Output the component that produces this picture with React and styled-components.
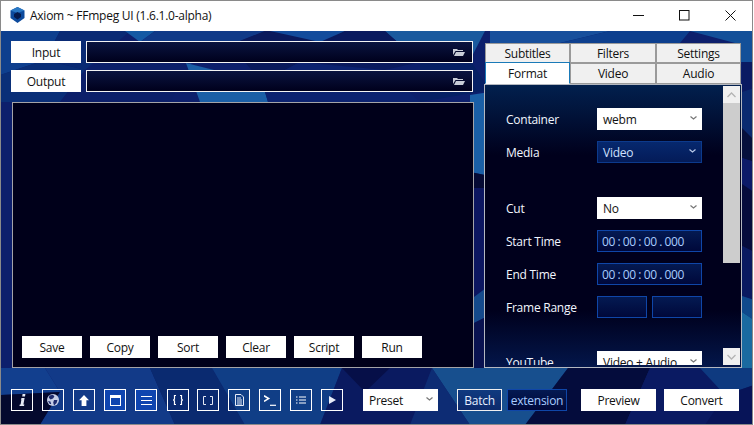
import React from "react";
import styled, { createGlobalStyle } from "styled-components";

const GlobalStyle = createGlobalStyle`
    html, body {
        margin: 0;
        padding: 0;
        background: #fff;
    }
    * {
        box-sizing: border-box;
    }
`;

const FONT = `"Open Sans", "Noto Sans", "Liberation Sans", sans-serif`;

// low-poly wallpaper, in screen coordinates
const polygons = [
    ["#0d1f6c", "0,31 754,31 754,425 0,425"],
    ["#0e3f8e", "0,31 60,31 45,60 0,75"],
    ["#0a2a74", "60,31 130,31 85,70 45,60"],
    ["#0a2f78", "0,75 45,60 85,70 60,102 0,102"],
    ["#145aa4", "125,31 155,31 140,42"],
    ["#0c1f6a", "85,70 140,42 190,64 170,102 60,102"],
    ["#103a88", "155,31 265,31 230,45 190,64 140,42"],
    ["#1b5fa6", "186,63 262,82 268,102 200,102"],
    ["#0a1a5c", "230,45 265,31 350,31 300,62 262,82"],
    ["#134c9c", "270,31 345,31 320,42"],
    ["#0c2270", "262,82 300,62 385,70 420,102 268,102"],
    ["#1a5a9e", "385,31 485,31 470,60 420,62"],
    ["#0a1a5e", "345,31 385,31 420,62 385,70 300,62"],
    ["#062064", "420,62 470,60 490,90 420,102"],
    ["#1a5fa6", "470,95 490,92 490,176 470,172"],
    ["#050a34", "470,172 490,176 490,192 470,188"],
    ["#0c1660", "470,188 490,188 490,290 470,300"],
    ["#154a8c", "470,300 490,285 490,315 470,325"],
    ["#091250", "470,325 490,315 490,370 470,370"],
    ["#174f9c", "490,31 610,31 560,43 490,43"],
    ["#0d3f8e", "610,31 690,31 680,43 560,43"],
    ["#135099", "690,31 754,31 754,62 735,62 735,43"],
    ["#0a1a62", "742,62 754,62 754,92 742,92"],
    ["#0a2a70", "742,92 754,88 754,140 742,128"],
    ["#06103c", "742,128 754,140 754,162 742,158"],
    ["#0c1a68", "742,158 754,162 754,192 742,184"],
    ["#060c3c", "742,184 754,192 754,252 742,246"],
    ["#0a1a60", "742,246 754,252 754,300 742,296"],
    ["#0f4a8c", "742,296 754,300 754,320 742,312"],
    ["#1a6aa0", "742,312 754,320 754,372 742,372"],
    ["#123f8e", "0,368 45,368 60,392 0,395"],
    ["#04092e", "0,395 60,392 40,425 0,425"],
    ["#123a88", "45,368 150,368 175,425 40,425 60,392"],
    ["#0a2a70", "150,368 212,368 245,425 175,425"],
    ["#103e86", "212,368 342,368 320,425 245,425"],
    ["#0a1a60", "342,368 432,368 410,425 320,425"],
    ["#060f48", "342,368 390,368 365,392"],
    ["#174f8e", "432,368 568,368 525,425 470,425"],
    ["#0d2c74", "432,368 470,425 410,425"],
    ["#040c3c", "568,368 650,368 625,425 525,425"],
    ["#0a1a62", "650,368 754,368 754,425 625,425"],
    ["#0e3a80", "700,368 754,368 754,385 725,395"],
    ["#071458", "725,395 754,385 754,425 705,425"],
];

const App = () => {
    const leftButtons = ["Save", "Copy", "Sort", "Clear", "Script", "Run"];
    return (
        <>
            <GlobalStyle />
            <Window>
                <TitleBar>
                    <AppIcon viewBox="0 0 15 16">
                        <path d="M7.5 0 14.5 3.5V11L7.5 16 .5 11V3.5Z" fill="#0d4a9c" />
                        <path d="M7.5 0 14.5 3.5 7.5 6 .5 3.5Z" fill="#2a78c4" />
                        <path d="M7.5 5 11 7V10L7.5 12.5 4 10V7Z" fill="#051a4c" />
                    </AppIcon>
                    <Title>Axiom ~ FFmpeg UI (1.6.1.0-alpha)</Title>
                    <WindowControls>
                        <WindowControl><svg width="11" height="11"><path d="M0 5.5H11" stroke="#111" /></svg></WindowControl>
                        <WindowControl><svg width="11" height="11"><rect x=".5" y=".5" width="9.5" height="9.5" fill="none" stroke="#111" /></svg></WindowControl>
                        <WindowControl><svg width="11" height="11"><path d="M.5.5 10.5 10.5M10.5.5.5 10.5" stroke="#111" /></svg></WindowControl>
                    </WindowControls>
                </TitleBar>
                <Body>
                    <Backdrop viewBox="1 31 751 393" preserveAspectRatio="none">
                        {polygons.map(([fill, points]) => (
                            <polygon key={points} fill={fill} points={points} />
                        ))}
                    </Backdrop>
                    <Main>
                        <LeftColumn>
                            <PathRow>
                                <PathButton>Input</PathButton>
                                <PathField><FolderIcon /></PathField>
                            </PathRow>
                            <PathRow>
                                <PathButton>Output</PathButton>
                                <PathField><FolderIcon /></PathField>
                            </PathRow>
                            <Console>
                                <ConsoleButtons>
                                    {leftButtons.map((label) => (
                                        <ConsoleButton key={label}>{label}</ConsoleButton>
                                    ))}
                                </ConsoleButtons>
                            </Console>
                        </LeftColumn>
                        <RightColumn>
                            <Tabs>
                                <Tab>Subtitles</Tab>
                                <Tab>Filters</Tab>
                                <Tab>Settings</Tab>
                                <Tab $active>Format</Tab>
                                <Tab>Video</Tab>
                                <Tab>Audio</Tab>
                            </Tabs>
                            <Panel>
                                <PanelContent>
                                    <FormRow>
                                        <FormLabel>Container</FormLabel>
                                        <Select>webm<Chevron /></Select>
                                    </FormRow>
                                    <FormRow>
                                        <FormLabel>Media</FormLabel>
                                        <Select $dark>Video<Chevron $light /></Select>
                                    </FormRow>
                                    <FormRow $top={34}>
                                        <FormLabel>Cut</FormLabel>
                                        <Select>No<Chevron /></Select>
                                    </FormRow>
                                    <FormRow>
                                        <FormLabel>Start Time</FormLabel>
                                        <TimeField>00 : 00 : 00 . 000</TimeField>
                                    </FormRow>
                                    <FormRow>
                                        <FormLabel>End Time</FormLabel>
                                        <TimeField>00 : 00 : 00 . 000</TimeField>
                                    </FormRow>
                                    <FormRow>
                                        <FormLabel>Frame Range</FormLabel>
                                        <FramePair>
                                            <TimeField />
                                            <TimeField />
                                        </FramePair>
                                    </FormRow>
                                    <FormRow $top={33}>
                                        <FormLabel>YouTube</FormLabel>
                                        <Select>Video + Audio<Chevron /></Select>
                                    </FormRow>
                                </PanelContent>
                                <Scrollbar>
                                    <ScrollArrow><ArrowIcon $up /></ScrollArrow>
                                    <ScrollThumb />
                                    <ScrollTrack />
                                    <ScrollArrow><ArrowIcon /></ScrollArrow>
                                </Scrollbar>
                            </Panel>
                        </RightColumn>
                    </Main>
                    <Footer>
                        <IconGroup>
                            <IconButton>
                                <svg width="8" height="12" viewBox="0 0 8 12"><path d="M4.6 0H7.4L7 2.4H4.2ZM3.6 4H6.6L5.4 10.4H6.4L6 12H1.4L1.8 10.4H2.6L3.4 5.6H2.8Z" fill="#e4e8f4" /></svg>
                            </IconButton>
                            <IconButton>
                                <svg width="12" height="12" viewBox="0 0 12 12"><circle cx="6" cy="6" r="6" fill="#c6cee6" /><path d="M2.5 1.4 6 .8 7.4 2.4 6 4.6 3.6 5.4 1.8 3.8ZM7 6 10.4 6 9.6 9 7 11.4 6.2 8.4ZM1 7 3.4 7.6 4.2 10 2.8 10Z" fill="#1f2c6e" /></svg>
                            </IconButton>
                            <IconButton>
                                <svg width="10" height="11" viewBox="0 0 10 11"><path d="M5 0 10 5.2H7.4V11H2.6V5.2H0Z" fill="#fff" /></svg>
                            </IconButton>
                            <IconButton $active>
                                <svg width="11" height="11" viewBox="0 0 11 11"><path d="M0 0H11V11H0ZM1 3V10H10V3Z" fill="#fff" fillRule="evenodd" /></svg>
                            </IconButton>
                            <IconButton $active>
                                <svg width="11" height="9" viewBox="0 0 11 9"><path d="M0 .5H11M0 4.5H11M0 8.5H11" stroke="#fff" /></svg>
                            </IconButton>
                            <IconButton $wide>
                                <svg width="10" height="10" viewBox="0 0 10 10"><path d="M3 .5H1.5V4L.5 5 1.5 6V9.500H3M7 .5H8.500V4L9.500 5 8.500 6V9.500H7" fill="none" stroke="#fff" strokeWidth="1.2" /></svg>
                            </IconButton>
                            <IconButton>
                                <svg width="10" height="9" viewBox="0 0 10 9"><path d="M3 .5H.5V8.500H3M7 .5H9.500V8.500H7" fill="none" stroke="#e4e8f4" /></svg>
                            </IconButton>
                            <IconButton>
                                <svg width="9" height="12" viewBox="0 0 9 12"><path d="M.5.5H6L8.500 3V11.500H.5ZM2 4H6M2 6H7M2 8H7M2 10H7" fill="none" stroke="#e8ecf8" /></svg>
                            </IconButton>
                            <IconButton>
                                <svg width="12" height="11" viewBox="0 0 12 11"><path d="M0 .8 4.6 3.6 0 6.400" fill="none" stroke="#fff" strokeWidth="1.6" /><path d="M6 10.300H12" stroke="#fff" strokeWidth="1.2" /></svg>
                            </IconButton>
                            <IconButton>
                                <svg width="10" height="8" viewBox="0 0 10 8"><path d="M0 1H1.500M3 1H10M0 4H1.500M3 4H10M0 7H1.500M3 7H10" stroke="#fff" /></svg>
                            </IconButton>
                            <IconButton>
                                <svg width="7" height="8" viewBox="0 0 7 8"><path d="M0 0 7 4 0 8Z" fill="#e8ecf8" /></svg>
                            </IconButton>
                        </IconGroup>
                        <PresetSelect>Preset<Chevron /></PresetSelect>
                        <BatchButton>Batch</BatchButton>
                        <ExtensionField>extension</ExtensionField>
                        <ActionButton>Preview</ActionButton>
                        <ActionButton>Convert</ActionButton>
                    </Footer>
                </Body>
            </Window>
        </>
    );
};

export default App;

const FolderIcon = () => (
    <svg width="12" height="8" viewBox="0 0 12 8">
        <path d="M0 1H4L5 2H10V3H2.500L0 7ZM3 4H12L10 8H1Z" fill="#c8ccd6" />
    </svg>
);

const Chevron = ({ $light }) => (
    <ChevronSvg width="7" height="4" viewBox="0 0 7 4">
        <path d="M.5.5 3.500 3 6.500.5" fill="none" stroke={$light ? "#b8c8e8" : "#777"} strokeWidth="1.2" />
    </ChevronSvg>
);

const ArrowIcon = ({ $up }) => (
    <svg width="9" height="6" viewBox="0 0 9 6">
        <path d={$up ? "M.5 5 4.500 1 8.500 5" : "M.5 1 4.500 5 8.500 1"} fill="none" stroke="#b4b4b4" strokeWidth="1.3" />
    </svg>
);

const Window = styled.div`
    width: 753px;
    height: 425px;
    display: flex;
    flex-direction: column;
    border: 1px solid #8a8a8a;
    overflow: hidden;
    font-family: ${FONT};
    font-size: 12px;
    letter-spacing: -0.25px;
    color: #111;
`;

const TitleBar = styled.div`
    height: 30px;
    flex: none;
    display: flex;
    align-items: center;
    padding: 0 0 2px 9px;
    background: #fff;
`;

const AppIcon = styled.svg`
    width: 15px;
    height: 16px;
    margin-right: 5px;
`;

const Title = styled.span`
    flex: 1;
    color: #111;
`;

const WindowControls = styled.div`
    display: flex;
    margin-right: -1px;
`;

const WindowControl = styled.div`
    width: 46px;
    height: 28px;
    display: flex;
    align-items: center;
    justify-content: center;
`;

const Body = styled.div`
    position: relative;
    flex: 1;
    display: flex;
    flex-direction: column;
    min-height: 0;
    background: #0c2a6e;
`;

const Backdrop = styled.svg`
    position: absolute;
    inset: 0;
    width: 100%;
    height: 100%;
`;

const Main = styled.div`
    position: relative;
    display: flex;
    height: 337px;
    padding: 10px 0 0 10px;
`;

const LeftColumn = styled.div`
    width: 463px;
    display: flex;
    flex-direction: column;
`;

const PathRow = styled.div`
    display: flex;
    gap: 5px;
    height: 22px;
    margin-bottom: 7px;
    padding-right: 1px;
`;

const PathButton = styled.div`
    width: 70px;
    display: flex;
    align-items: center;
    justify-content: center;
    background: #fff;
`;

const PathField = styled.div`
    flex: 1;
    display: flex;
    align-items: center;
    justify-content: flex-end;
    padding-right: 7px;
    border: 1px solid #f4f4f4;
    background: linear-gradient(#0a1440, #00001c);
`;

const Console = styled.div`
    flex: 1;
    margin: 3px 0 0 1px;
    display: flex;
    align-items: flex-end;
    padding: 0 0 9px 9px;
    border: 1px solid #a4a4a8;
    background: #00001a;
`;

const ConsoleButtons = styled.div`
    display: flex;
    gap: 8px;
`;

const ConsoleButton = styled.div`
    width: 60px;
    height: 22px;
    display: flex;
    align-items: center;
    justify-content: center;
    background: #fff;
`;

const RightColumn = styled.div`
    margin-left: 10px;
    width: 258px;
    display: flex;
    flex-direction: column;
`;

const Tabs = styled.div`
    display: grid;
    grid-template-columns: 85px 86px 85px;
    grid-template-rows: 20px 21px;
    margin: 2px 1px 0;
`;

const Tab = styled.div`
    display: flex;
    align-items: center;
    justify-content: center;
    margin-top: ${({ $active }) => ($active ? -1 : 0)}px;
    border: 1px solid ${({ $active }) => ($active ? "#1a7ab8" : "#9a9a9a")};
    border-bottom-color: ${({ $active }) => ($active ? "#fff" : "#9a9a9a")};
    background: ${({ $active }) => ($active ? "#fff" : "#f0f0f0")};
    color: #111;
`;

const Panel = styled.div`
    height: 284px;
    display: flex;
    padding: 1px 1px 2px;
    border: 1px solid #b4b8c0;
    background: linear-gradient(#02204e 0, #00001c 70px, #00001c 225px, #03164a 100%);
`;

const PanelContent = styled.div`
    flex: 1;
    min-width: 0;
    overflow: hidden;
    padding: 22px 21px 0 20px;
`;

const FormRow = styled.div`
    display: flex;
    align-items: center;
    justify-content: space-between;
    height: 22px;
    margin-top: ${({ $top }) => $top || 11}px;
    &:first-child {
        margin-top: 0;
    }
`;

const FormLabel = styled.span`
    color: #f2f6ff;
`;

const Select = styled.div`
    width: 105px;
    height: 22px;
    flex: none;
    display: flex;
    align-items: center;
    justify-content: space-between;
    padding: 0 5px 0 ${({ $dark }) => ($dark ? 5 : 6)}px;
    background: ${({ $dark }) => ($dark ? "linear-gradient(#06286e, #041b58)" : "#fff")};
    border: ${({ $dark }) => ($dark ? "1px solid #0c3a8c" : "none")};
    color: ${({ $dark }) => ($dark ? "#cfe0ff" : "#111")};
`;

const ChevronSvg = styled.svg`
    flex: none;
    margin-bottom: 2px;
`;

const TimeField = styled.div`
    flex: 1;
    min-width: 0;
    width: 105px;
    height: 22px;
    display: flex;
    align-items: center;
    padding-left: 4px;
    white-space: nowrap;
    letter-spacing: -0.45px;
    border: 1px solid #0f46a8;
    background: linear-gradient(#041a52, #00083a);
    color: #a8ccff;
    ${FormRow} > & {
        flex: none;
    }
`;

const FramePair = styled.div`
    width: 105px;
    display: flex;
    gap: 5px;
`;

const Scrollbar = styled.div`
    width: 17px;
    flex: none;
    display: flex;
    flex-direction: column;
`;

const ScrollArrow = styled.div`
    height: 17px;
    flex: none;
    display: flex;
    align-items: center;
    justify-content: center;
    background: #f0f0f0;
`;

const ScrollThumb = styled.div`
    height: 160px;
    flex: none;
    background: #cdcdcd;
`;

const ScrollTrack = styled.div`
    flex: 1;
`;

const Footer = styled.div`
    position: relative;
    display: flex;
    align-items: center;
    height: 56px;
    padding: 8px 0 0 10px;
`;

const IconGroup = styled.div`
    display: flex;
    gap: 9px;
    margin-right: 20px;
`;

const IconButton = styled.div`
    width: 22px;
    height: 22px;
    margin: 0 ${({ $wide }) => ($wide ? -1 : 0)}px 0 ${({ $wide }) => ($wide ? 1 : 0)}px;
    display: flex;
    align-items: center;
    justify-content: center;
    border: 1px solid #fff;
    background: ${({ $active }) => ($active ? "#0f45b0" : "transparent")};
`;

const PresetSelect = styled(Select)`
    width: 75px;
`;

const BatchButton = styled.div`
    width: 45px;
    height: 22px;
    margin-left: 19px;
    display: flex;
    align-items: center;
    justify-content: center;
    border: 1px solid #f0f0f0;
    background: linear-gradient(#0f3a80, #0d2a6c);
    color: #e6eeff;
`;

const ExtensionField = styled.div`
    width: 60px;
    height: 22px;
    margin-left: 5px;
    display: flex;
    align-items: center;
    justify-content: center;
    border: 1px solid #0f46a8;
    background: linear-gradient(#041a52, #00083a);
    color: #a8ccff;
`;

const ActionButton = styled.div`
    width: 75px;
    height: 22px;
    margin-left: 8px;
    display: flex;
    align-items: center;
    justify-content: center;
    background: #fff;
    ${ExtensionField} + & {
        margin-left: 14px;
    }
`;
